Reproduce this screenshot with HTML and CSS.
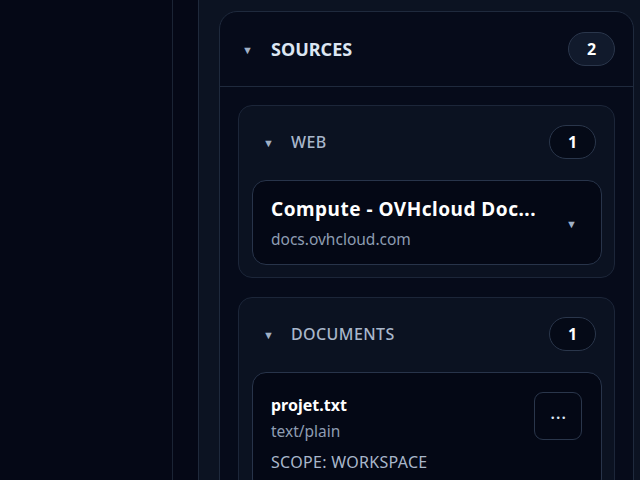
FILE: index.html
```html
<!DOCTYPE html>
<html lang="en">
<head>
<meta charset="UTF-8">
<meta name="viewport" content="width=device-width, initial-scale=1.0">
<title>Sources</title>
<link rel="stylesheet" href="styles.css">
</head>
<body>
    <div class="layout">
        <div class="sidebar"></div>
        <div class="rail"></div>
        <div class="panel">
            <div class="sources">
                <div class="sources-head">
                    <span class="caret">&#9660;</span>
                    <span class="sources-title">SOURCES</span>
                    <span class="badge badge-soft">2</span>
                </div>
                <div class="sources-body">
                    <!-- web sources -->
                    <div class="group">
                        <div class="group-head">
                            <span class="caret">&#9660;</span>
                            <span class="group-title">WEB</span>
                            <span class="badge">1</span>
                        </div>
                        <div class="item">
                            <div class="item-text">
                                <div class="item-name">Compute - OVHcloud Doc...</div>
                                <div class="item-sub">docs.ovhcloud.com</div>
                            </div>
                            <span class="caret item-caret">&#9660;</span>
                        </div>
                    </div>
                    <!-- documents -->
                    <div class="group">
                        <div class="group-head">
                            <span class="caret">&#9660;</span>
                            <span class="group-title">DOCUMENTS</span>
                            <span class="badge">1</span>
                        </div>
                        <div class="item item-doc">
                            <div class="item-text">
                                <div class="doc-name">projet.txt</div>
                                <div class="item-sub">text/plain</div>
                                <div class="item-scope">SCOPE: WORKSPACE</div>
                            </div>
                            <button class="more">...</button>
                        </div>
                    </div>
                </div>
            </div>
        </div>
    </div>
</body>
</html>
```

FILE: styles.css
```css
html, body{
    margin: 0;
    height: 100%;
    overflow: hidden;
}
body{
    background: #050816;
    font-family: "Noto Sans", "Open Sans", sans-serif;
    color: #dce6f2;
}
.layout{
    display: flex;
    height: 480px;
}
.sidebar{
    width: 172px;
    border-right: 1px solid #1b2435;
}
.rail{
    width: 25px;
    border-right: 1px solid #1f293b;
}
.panel{
    flex: 1;
    background: #0c1322;
    padding: 11px 6px 0 20px;
    overflow: hidden;
}
.sources{
    background: #060b1a;
    border: 1px solid #1f2a3d;
    border-radius: 18px;
    height: 600px;
}
.sources-head{
    display: flex;
    align-items: center;
    height: 74px;
    padding: 0 18px 0 22px;
    border-bottom: 1px solid #1f2a3d;
}
.caret{
    font-size: 11px;
    color: #9fb0c6;
    width: 10px;
}
.sources-title{
    flex: 1;
    margin-left: 19px;
    font-size: 18px;
    font-weight: 700;
    color: #dce6f2;
}
.badge{
    width: 45px;
    height: 32px;
    border: 1px solid #2a364b;
    border-radius: 17px;
    background: #050a17;
    color: #ffffff;
    font-size: 16px;
    font-weight: 700;
    display: flex;
    align-items: center;
    justify-content: center;
}
.badge-soft{
    background: #111a2c;
}
.sources-body{
    padding: 18px 18px 0 18px;
    display: flex;
    flex-direction: column;
    gap: 19px;
}
.group{
    background: #0b1221;
    border: 1px solid #1c2639;
    border-radius: 14px;
    padding: 19px 12px 12px 13px;
}
.group-head{
    display: flex;
    align-items: center;
    height: 34px;
    padding: 0 6px 0 11px;
    margin-bottom: 21px;
}
.group-title{
    flex: 1;
    margin-left: 18px;
    font-size: 16px;
    font-weight: 500;
    letter-spacing: 0.4px;
    color: #a9b7cb;
}
.item{
    background: #040815;
    border: 1px solid #28344a;
    border-radius: 14px;
    display: flex;
    align-items: center;
    height: 83px;
    padding: 0 25px 0 18px;
}
.item-text{
    flex: 1;
    min-width: 0;
}
.item-name{
    font-size: 19px;
    font-weight: 700;
    letter-spacing: 0.5px;
    color: #ffffff;
    white-space: nowrap;
    line-height: 24px;
}
.item-sub{
    font-size: 15.5px;
    color: #8e9db2;
    margin-top: 8px;
    line-height: 20px;
}
.item-caret{
    margin-top: 2px;
}
.item-doc{
    align-items: flex-start;
    height: auto;
    padding: 19px 19px 20px 18px;
}
.doc-name{
    font-size: 16px;
    font-weight: 700;
    color: #ffffff;
    line-height: 22px;
    margin-top: 2px;
}
.item-doc .item-sub{
    margin-top: 5px;
}
.item-scope{
    font-size: 16px;
    letter-spacing: 0.3px;
    color: #a9b7cb;
    margin-top: 11px;
    line-height: 20px;
}
.more{
    width: 48px;
    height: 48px;
    border: 1px solid #2a364b;
    border-radius: 9px;
    background: #040815;
    color: #dce6f2;
    font-size: 14px;
    font-weight: 700;
    letter-spacing: 1.5px;
    font-family: "Noto Sans", sans-serif;
    padding: 0 0 6px 2px;
}
```
